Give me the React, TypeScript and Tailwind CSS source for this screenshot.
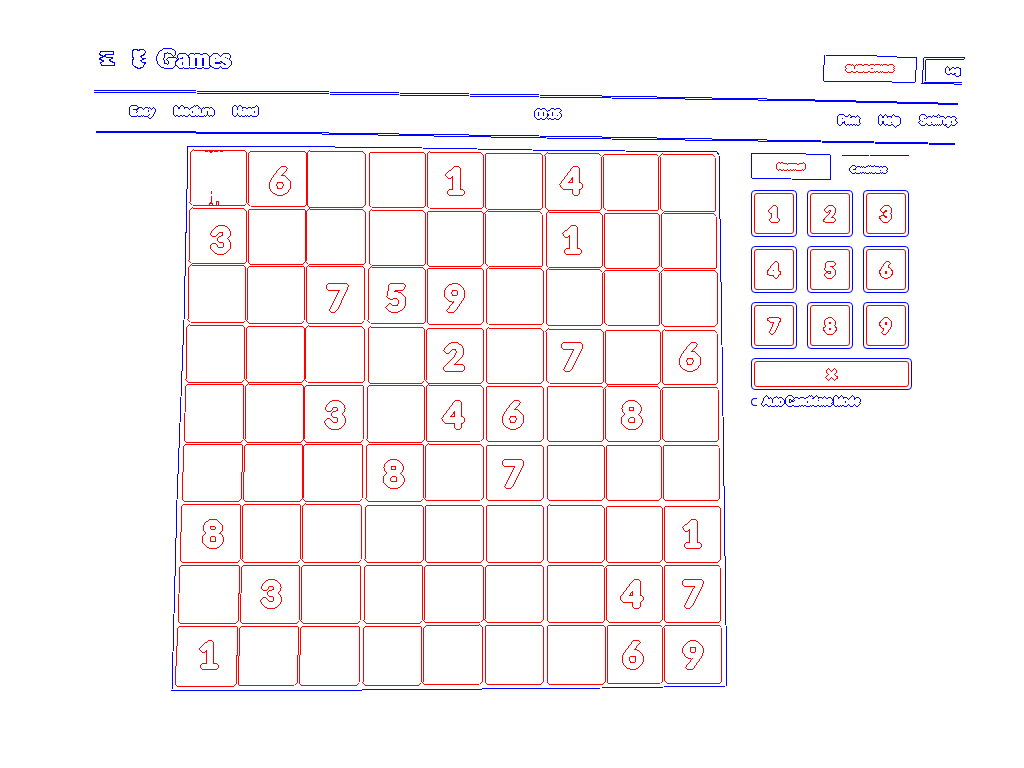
import { useState, type ReactNode } from "react";

const W = 556;
const H = 546;

// Edges of the nine cells along each side of the tilted board.
const TOP_X = [[19, 75], [77, 134], [135, 193], [197, 253], [255, 311], [313, 370], [373, 429], [431, 486], [488, 543]];
const BOTTOM_X = [[3, 64], [66, 125], [127, 187], [191, 249], [251, 310], [313, 371], [375, 433], [435, 491], [493, 550]];
const LEFT_Y = [[5, 60], [63, 118], [120, 177], [180, 237], [239, 297], [299, 356], [359, 417], [420, 478], [481, 541]];
const RIGHT_Y = [[10, 67], [69, 124], [126, 181], [186, 239], [242, 296], [300, 355], [361, 417], [420, 477], [480, 538]];

const PUZZLE = [
  " 6  1 4  ",
  "3     1  ",
  "  759    ",
  "    2 7 6",
  "  3 46 8 ",
  "   8 7   ",
  "8       1",
  " 3     47",
  "1      69",
];

type Point = [number, number];

function corner(tx: number, bx: number, ly: number, ry: number): Point {
  const x0 = tx + ((bx - tx) * ly) / H;
  const y = ly + ((ry - ly) * x0) / W;
  const t = y / H;
  const bow = 8 * t * (1 - t) * (1 - x0 / W);
  return [Math.round(tx + (bx - tx) * t + bow), Math.round(y)];
}

function cellCorners(r: number, c: number): Point[] {
  const [tl, tr] = TOP_X[c];
  const [bl, br] = BOTTOM_X[c];
  const [lt, lb] = LEFT_Y[r];
  const [rt, rb] = RIGHT_Y[r];
  return [corner(tl, bl, lt, rt), corner(tr, br, lt, rt), corner(tr, br, lb, rb), corner(tl, bl, lb, rb)];
}

function chamfered(points: Point[], cut: number): string {
  return points
    .map((p, i) => {
      const toward = (q: Point) => {
        const d = Math.hypot(q[0] - p[0], q[1] - p[1]);
        return `${(p[0] + ((q[0] - p[0]) * cut) / d).toFixed(1)},${(p[1] + ((q[1] - p[1]) * cut) / d).toFixed(1)}`;
      };
      return `${toward(points[(i + 3) % 4])} ${toward(points[(i + 1) % 4])}`;
    })
    .join(" ");
}

const CROSS = "0 1 0 1 1 1 0 1 0";

// Traces text: thickens the letters until close ones merge, then keeps only a one-pixel rim.
function ContourFilter({ id, color }: { id: string; color: string }) {
  return (
    <filter id={id} x="-10%" y="-20%" width="120%" height="140%">
      <feComponentTransfer in="SourceAlpha" result="solid">
        <feFuncA type="discrete" tableValues="0 0 1 1 1" />
      </feComponentTransfer>
      <feConvolveMatrix in="solid" order="3" kernelMatrix={CROSS} divisor="1" result="thick" />
      <feConvolveMatrix in="thick" order="3" kernelMatrix={CROSS} divisor="1" result="thicker" />
      <feComposite in="thicker" in2="thick" operator="out" result="rim" />
      <feFlood floodColor={color} />
      <feComposite in2="rim" operator="in" />
    </filter>
  );
}

function ContourDefs() {
  return (
    <svg width="0" height="0" className="absolute" aria-hidden="true">
      <defs>
        <ContourFilter id="contour-blue" color="#00f" />
        <ContourFilter id="contour-red" color="#f00" />
      </defs>
    </svg>
  );
}

function Contour({ red, children }: { red?: boolean; children: ReactNode }) {
  return (
    <span className={`inline-block ${red ? "text-[#f00] [filter:url(#contour-red)]" : "text-[#00f] [filter:url(#contour-blue)]"}`}>
      {children}
    </span>
  );
}

function Outline({ box, points }: { box: string; points: string }) {
  return (
    <svg className="pointer-events-none absolute inset-0 h-full w-full overflow-visible" viewBox={box} preserveAspectRatio="none" aria-hidden="true">
      <polyline points={points} fill="none" stroke="#00f" shapeRendering="crispEdges" vectorEffect="non-scaling-stroke" />
    </svg>
  );
}

function Rule({ d }: { d: string }) {
  return (
    <svg className="block h-4 w-full overflow-visible" viewBox="0 0 870 16" preserveAspectRatio="none" aria-hidden="true">
      <path d={d} fill="none" stroke="#00f" shapeRendering="crispEdges" vectorEffect="non-scaling-stroke" />
    </svg>
  );
}

function Header() {
  return (
    <header className="flex h-[49px] items-start justify-between">
      <div className="flex items-start pl-[5px]">
        <button aria-label="Menu" className="mt-2.5">
          <svg width="16" height="17" viewBox="0 0 16 17" fill="none" stroke="#00f" shapeRendering="crispEdges">
            <path d="M1.500 1.500H14.500V4.500H7.500L5.500 5.500L7.500 7.500H13.500V8.500L10.500 9.500L11.500 11.500L15.500 12.500V15.500H2.500L1.500 12.500L4.500 11.500V10.500L0.500 9.500V8.500L4.500 6.500L0.500 4.500Z" />
          </svg>
        </button>
        <svg className="mt-2 ml-4" width="16" height="21" viewBox="0 0 16 21" fill="none" stroke="#00f" shapeRendering="crispEdges" aria-hidden="true">
          <path d="M2.500 1.500H5.500L7.500 2.500L9.500 1.500H12.500L14.500 3.500L13.500 6.500L9.500 8.500L11.500 10.500H14.500L9.500 12.500L11.500 14.500L14.500 14.500L13.500 16.500L11.500 19.500L7.500 20.500L3.500 18.500L1.500 16.500V12.500L2.500 10.500L1.500 8.500V3.500Z" />
        </svg>
        <a href="#games" className="ml-2.5 mt-1 font-['Liberation_Serif',serif] text-[25px] leading-[30px] font-bold">
          <Contour>Games</Contour>
        </a>
      </div>
      <div className="flex items-start gap-1 pt-[15px]">
        <button className="relative h-7 w-24 text-[8px] leading-7 font-bold">
          <Outline box="0 0 96 28" points="3,0 55,1 95,3 93,27 78,28 70,27 1,26 1,20 3,0" />
          <Contour red>SUBSCRIBE</Contour>
        </button>
        <button className="relative mt-0.5 h-7 w-[42px] pl-5 text-[8px] leading-7">
          <Outline box="0 0 42 28" points="42,2 42,0 4,0 2,1 0,26 24,26 40,28" />
          <Outline box="0 0 42 28" points="42,2 6,2 4,3 3,25 24,25 40,26" />
          <Contour>Log</Contour>
        </button>
      </div>
    </header>
  );
}

function NavLink({ href, children }: { href: string; children: ReactNode }) {
  return (
    <a href={href}>
      <Contour>{children}</Contour>
    </a>
  );
}

function Toolbar() {
  return (
    <nav className="flex h-[26px] items-start justify-between pr-2 pl-9 text-[10px] leading-4">
      <div className="-mt-0.5 flex gap-5 text-[11px]">
        <NavLink href="#easy">Easy</NavLink>
        <NavLink href="#medium">Medium</NavLink>
        <NavLink href="#hard">Hard</NavLink>
      </div>
      <time className="mt-0.5">
        <Contour>00:05</Contour>
      </time>
      <div className="mt-2 flex gap-5">
        <NavLink href="#print">Print</NavLink>
        <NavLink href="#help">Help</NavLink>
        <NavLink href="#settings">Settings</NavLink>
      </div>
    </nav>
  );
}

function Board() {
  return (
    <section
      aria-label="Sudoku board"
      className="relative grid aspect-[556/546] w-full max-w-[556px] shrink-0 py-1.5"
      style={{ gridTemplateRows: LEFT_Y.map(([a, b], r) => `${(b - a + RIGHT_Y[r][1] - RIGHT_Y[r][0]) / 2 + 3}fr`).join(" ") }}
    >
      <svg className="pointer-events-none absolute inset-0 h-full w-full overflow-visible" viewBox={`0 0 ${W} ${H}`} fill="none" shapeRendering="crispEdges" aria-hidden="true">
        <polygon points="16,1 75,1 250,3 360,5 545,7 547,10 550,200 554,480 555,539 554,541 430,543 190,545 0,545 5,355 12,175" stroke="#00f" />
        {PUZZLE.map((_, r) =>
          TOP_X.map((_, c) => <polygon key={`${r}${c}`} points={chamfered(cellCorners(r, c), 2)} stroke="#f00" />),
        )}
        <path stroke="#f00" d="M32 5l2 2 3-2 2 3 2-3 3 2 3-2 3 2 2-2M39 46v3M39 51v6l-2 3M39 57l2 3 3 0 0-4 2 0 1 4" />
      </svg>
      {PUZZLE.map((row, r) => {
        const first = cellCorners(r, 0);
        const last = cellCorners(r, 8);
        return (
          <div
            key={r}
            className="flex min-h-0"
            style={{
              paddingLeft: `${((first[0][0] + first[3][0]) / 2 / W) * 100}%`,
              paddingRight: `${((W - (last[1][0] + last[2][0]) / 2) / W) * 100}%`,
            }}
          >
            {[...row].map((digit, c) => (
              <button
                key={c}
                aria-label={digit.trim() ? undefined : `Row ${r + 1}, column ${c + 1}, empty`}
                className="flex min-w-0 flex-1 items-center justify-center pl-1 font-['Lato',sans-serif] text-[36px] leading-none font-bold"
              >
                {digit.trim() && <Contour red>{digit}</Contour>}
              </button>
            ))}
          </div>
        );
      })}
    </section>
  );
}

function Key({ label, value, onPress, wide }: { label?: string; value: string; onPress: (v: string) => void; wide?: boolean }) {
  return (
    <button
      aria-label={label}
      onClick={() => onPress(value)}
      className={`rounded-[4px] border border-[#00f] p-0.5 ${wide ? "mt-[9px] h-8 w-full" : "h-[47px]"}`}
    >
      <span className="flex h-full items-center justify-center rounded-[3px] border border-[#f00] font-['Lato',sans-serif] text-[18px] leading-none font-bold">
        <Contour red>{value}</Contour>
      </span>
    </button>
  );
}

function Keypad() {
  const [, setEntry] = useState("");
  return (
    <aside className="w-[161px] shrink-0 pt-2">
      <div className="flex h-[27px]">
        <button className="relative w-20 text-[8px] font-bold">
          <Outline box="0 0 80 27" points="0,0 30,0 79,2 80,27 40,26 1,25 0,22 0,0" />
          <Contour red>Normal</Contour>
        </button>
        <button className="relative flex-1 pt-1.5 pr-1.5 text-[8px]">
          <Outline box="0 0 81 27" points="11,2 38,2 78,3" />
          <Contour>Candidate</Contour>
        </button>
      </div>
      <div className="mt-2.5 mr-[3px] grid grid-cols-3 gap-x-2.5 gap-y-[9px]">
        {[..."123456789"].map((n) => (
          <Key key={n} value={n} onPress={setEntry} />
        ))}
      </div>
      <Key value="×" label="Delete" onPress={setEntry} wide />
      <label className="mt-1 flex items-center gap-1.5 text-[10px] leading-4 whitespace-nowrap">
        <input type="checkbox" className="h-2 w-1.5 appearance-none rounded-l-[4px] border-y border-l border-[#00f]" />
        <Contour>Auto Candidate Mode</Contour>
      </label>
    </aside>
  );
}

export default function App() {
  return (
    <div className="min-h-screen bg-white pt-10 pr-[60px] pb-10 pl-[94px] font-['Liberation_Sans',sans-serif]">
      <ContourDefs />
      <Header />
      <Rule d="M0 1.500L200 2.500L480 6.500L700 10.500L864 14.500M0 3.500L200 4.500L480 8.500L700 11.500L864 15.500" />
      <Toolbar />
      <Rule d="M2 0.500L200 1.500L480 5.500L700 9.500L861 12.500M2 1.500L200 2.500L480 7.500L700 10.500L861 13.500" />
      <main className="-mt-0.5 flex gap-[23px] pl-[78px]">
        <Board />
        <Keypad />
      </main>
    </div>
  );
}
